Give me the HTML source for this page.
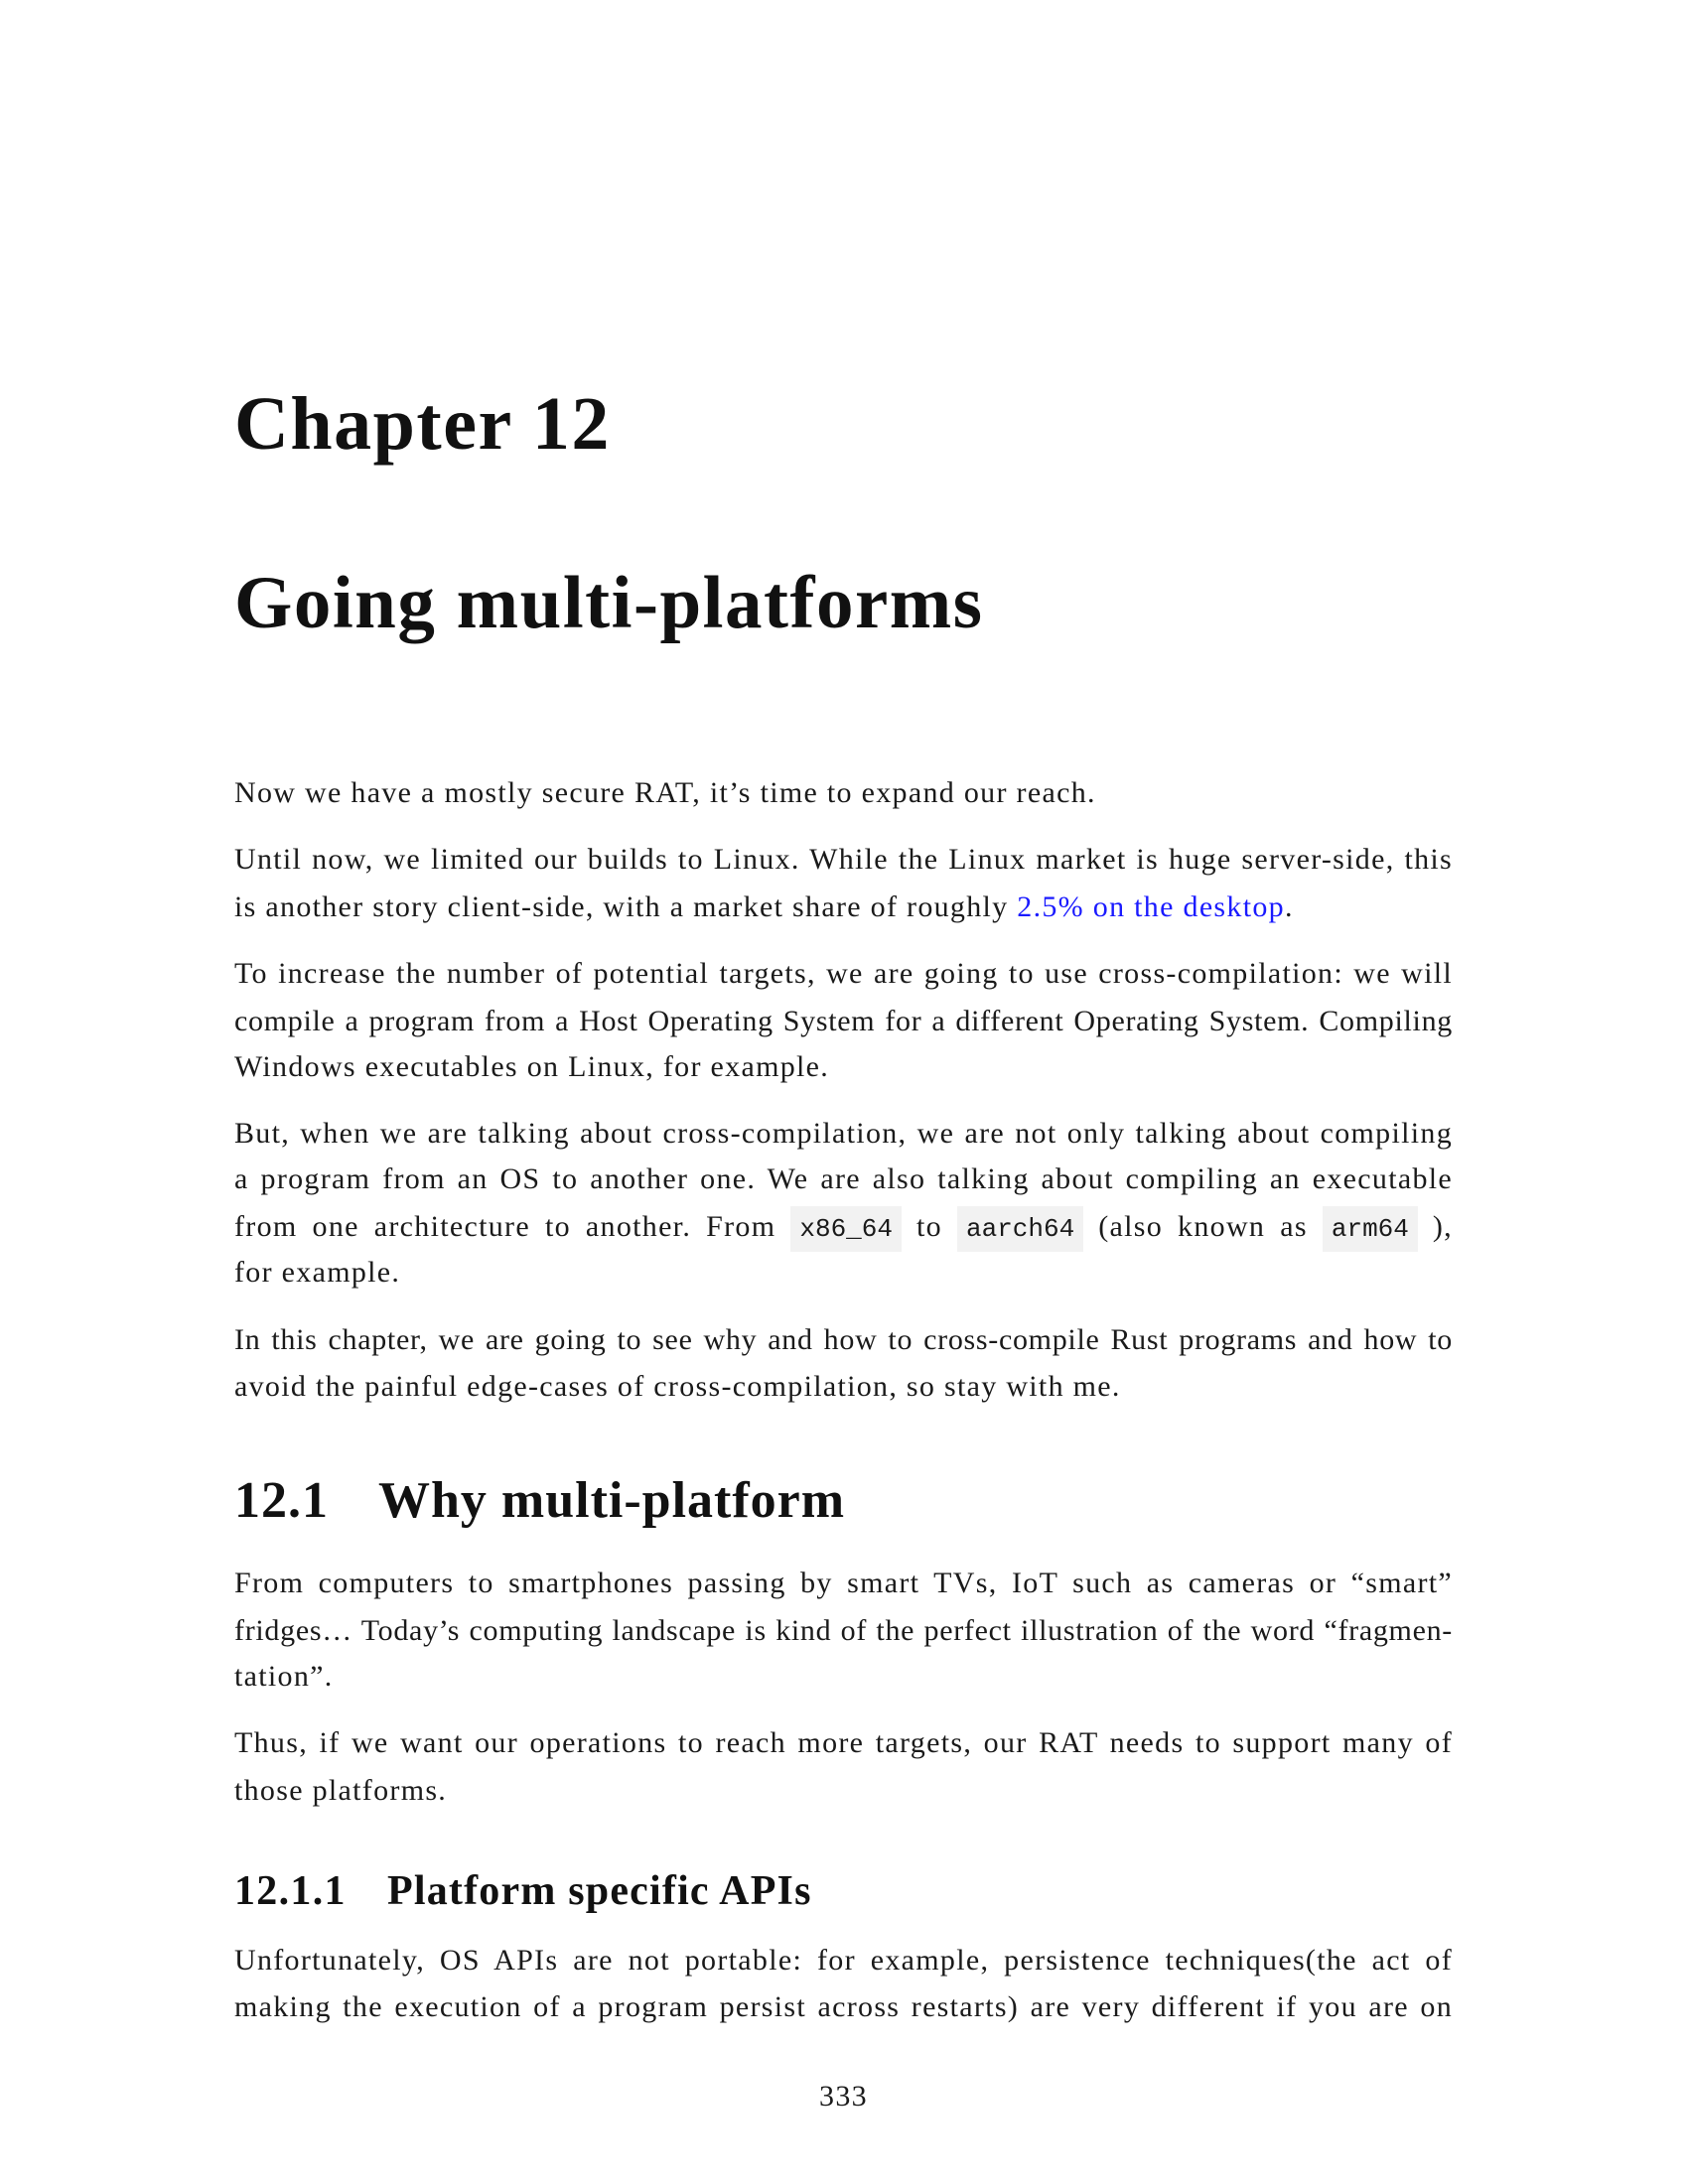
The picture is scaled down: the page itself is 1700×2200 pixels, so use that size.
<!DOCTYPE html>
<html><head><meta charset="utf-8"><style>
body{margin:0;background:#fff;}
.p{position:relative;width:1700px;height:2200px;overflow:hidden;font-family:"Liberation Serif",serif;color:#1a1a1a;}
.l{position:absolute;left:236px;width:1227px;height:48px;line-height:48px;font-size:30px;letter-spacing:1.3px;white-space:nowrap;}
.j{text-align:justify;text-align-last:justify;white-space:normal;}
.t{letter-spacing:0.7px;}
.h{position:absolute;left:236px;font-weight:bold;white-space:nowrap;color:#111;}
code{font-family:"Liberation Mono",monospace;font-size:26px;letter-spacing:0;background:#f2f2f2;padding:8px 9px;}
a{color:#1a1aff;text-decoration:none;}
</style></head><body><div class="p">
<div class="h" style="top:377px;font-size:76px;line-height:100px;letter-spacing:1.5px;">Chapter 12</div>
<div class="h" style="top:558px;font-size:75px;line-height:100px;letter-spacing:1.5px;">Going multi-platforms</div>

<div class="l" style="top:775px">Now we have a mostly secure RAT, it’s time to expand our reach.</div>
<div class="l j" style="top:842px">Until now, we limited our builds to Linux. While the Linux market is huge server-side, this</div>
<div class="l" style="top:890px">is another story client-side, with a market share of roughly <a>2.5% on the desktop</a>.</div>
<div class="l j" style="top:957px">To increase the number of potential targets, we are going to use cross-compilation: we will</div>
<div class="l j t" style="top:1005px">compile a program from a Host Operating System for a different Operating System. Compiling</div>
<div class="l" style="top:1051px">Windows executables on Linux, for example.</div>
<div class="l j" style="top:1118px">But, when we are talking about cross-compilation, we are not only talking about compiling</div>
<div class="l j" style="top:1164px">a program from an OS to another one. We are also talking about compiling an executable</div>
<div class="l j" style="top:1212px">from one architecture to another. From <code>x86_64</code> to <code>aarch64</code> (also known as <code>arm64</code> ),</div>
<div class="l" style="top:1258px">for example.</div>
<div class="l j t" style="top:1326px">In this chapter, we are going to see why and how to cross-compile Rust programs and how to</div>
<div class="l" style="top:1373px">avoid the painful edge-cases of cross-compilation, so stay with me.</div>

<div class="h" style="top:1480px;font-size:52px;line-height:64px;letter-spacing:1px;">12.1</div>
<div class="h" style="top:1480px;left:381px;font-size:52px;line-height:64px;letter-spacing:1px;">Why multi-platform</div>

<div class="l j" style="top:1571px">From computers to smartphones passing by smart TVs, IoT such as cameras or “smart”</div>
<div class="l j t" style="top:1619px">fridges… Today’s computing landscape is kind of the perfect illustration of the word “fragmen-</div>
<div class="l" style="top:1665px">tation”.</div>
<div class="l j" style="top:1732px">Thus, if we want our operations to reach more targets, our RAT needs to support many of</div>
<div class="l" style="top:1780px">those platforms.</div>

<div class="h" style="top:1878px;font-size:42px;line-height:54px;letter-spacing:1.3px;">12.1.1</div>
<div class="h" style="top:1878px;left:390px;font-size:42px;line-height:54px;letter-spacing:1.2px;">Platform specific APIs</div>

<div class="l j" style="top:1951px">Unfortunately, OS APIs are not portable: for example, persistence techniques(the act of</div>
<div class="l j" style="top:1998px">making the execution of a program persist across restarts) are very different if you are on</div>

<div class="l" style="top:2088px;text-align:center;">333</div>
</div></body></html>
